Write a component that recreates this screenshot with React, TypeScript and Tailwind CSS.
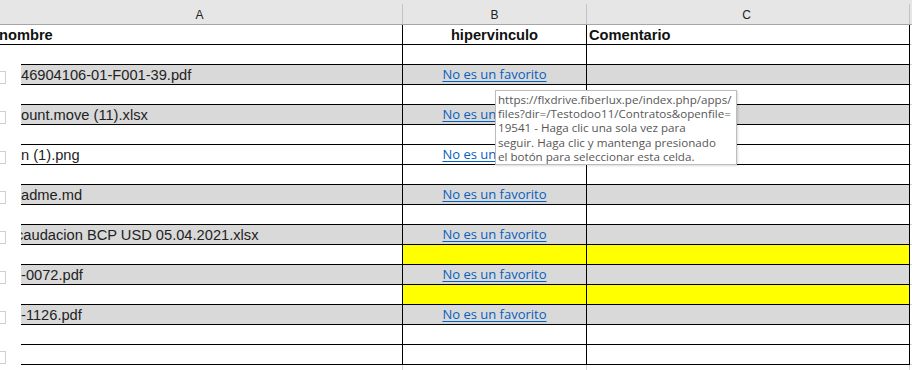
import React from "react";

// Sheet rows below the "nombre" header row
type Row = {
  name?: string;
  shift?: string;
  link?: boolean;
  fill: "white" | "gray" | "yellow";
  box?: boolean;
};

const ROWS: Row[] = [
  { fill: "white" },
  { name: "46904106-01-F001-39.pdf", link: true, fill: "gray", box: true },
  { fill: "white" },
  { name: "ount.move (11).xlsx", link: true, fill: "gray", box: true },
  { fill: "white" },
  { name: "n (1).png", link: true, fill: "white", box: true },
  { fill: "white" },
  { name: "adme.md", link: true, fill: "gray", box: true },
  { fill: "white" },
  { name: "caudacion BCP USD 05.04.2021.xlsx", shift: "ml-[-5px]", link: true, fill: "gray", box: true },
  { fill: "yellow" },
  { name: "-0072.pdf", link: true, fill: "gray", box: true },
  { fill: "yellow" },
  { name: "-1126.pdf", link: true, fill: "gray", box: true },
  { fill: "white" },
  { fill: "white", box: true },
];

const TOOLTIP = [
  "https://flxdrive.fiberlux.pe/index.php/apps/",
  "files?dir=/Testodoo11/Contratos&openfile=",
  "19541 - Haga clic una sola vez para",
  "seguir. Haga clic y mantenga presionado",
  "el botón para seleccionar esta celda.",
];

function SheetRow({ row }: { row: Row }) {
  const aBg = row.fill === "gray" ? "bg-[#d9d9d9]" : "bg-white";
  const bcBg =
    row.fill === "gray" ? "bg-[#d9d9d9]" : row.fill === "yellow" ? "bg-[#ffff00]" : "bg-white";

  return (
    <div className="flex h-[20px]">
      <div className="w-[21px] overflow-hidden">
        {row.box && (
          <div className="ml-[-7px] mt-[6px] h-[13px] w-[13px] border border-[#cfcfcf] bg-white" />
        )}
      </div>
      <div className={`w-[381px] overflow-hidden whitespace-nowrap border-b border-black ${aBg}`}>
        {row.name && (
          <div className={`text-[14.67px] leading-[21px] text-[#222] ${row.shift ?? ""}`}>{row.name}</div>
        )}
      </div>
      <div className="w-px bg-black" />
      <div className={`w-[183px] border-b border-black text-center leading-[18px] ${bcBg}`}>
        {row.link && (
          <span className="font-['Open_Sans',sans-serif] text-[13px] text-[#0560c0] underline underline-offset-[2px]">
            No es un favorito
          </span>
        )}
      </div>
      <div className="w-px bg-black" />
      <div className={`w-[322px] border-b border-black ${bcBg}`} />
      <div className="w-px bg-black" />
      <div className="w-[2px] border-b border-[#d4d4d4]" />
    </div>
  );
}

export default function App() {
  return (
    <div className="relative h-[370px] w-[912px] overflow-hidden bg-white font-['Liberation_Sans',Arial,sans-serif]">
      {/* Column letters */}
      <div className="flex h-[25px] border-b border-[#a6a6a6] bg-[#e6e6e6] text-[12px] leading-[20px] text-[#222]">
        <div className="w-[402px] pr-[3px] pt-[5px] text-center">A</div>
        <div className="mt-[4px] w-px bg-[#c4c4c4]" />
        <div className="w-[183px] pt-[5px] text-center">B</div>
        <div className="mt-[4px] w-px bg-[#c4c4c4]" />
        <div className="w-[322px] pr-[3px] pt-[5px] text-center">C</div>
        <div className="mt-[4px] w-px bg-[#c4c4c4]" />
        <div className="w-[2px]" />
      </div>

      {/* Header row */}
      <div className="flex h-[20px] text-[14.67px] font-bold leading-[20px] text-[#111]">
        <div className="w-[402px] overflow-hidden whitespace-nowrap border-b border-black">
          <div className="ml-[-1px]">nombre</div>
        </div>
        <div className="w-px bg-black" />
        <div className="w-[183px] border-b border-black text-center">hipervinculo</div>
        <div className="w-px bg-black" />
        <div className="w-[322px] border-b border-black pl-[2px]">Comentario</div>
        <div className="w-px bg-black" />
        <div className="w-[2px] border-b border-[#d4d4d4]" />
      </div>

      {ROWS.map((row, i) => (
        <SheetRow key={i} row={row} />
      ))}

      {/* Grid continues below */}
      <div className="flex h-[6px]">
        <div className="w-[402px]" />
        <div className="w-px bg-[#d4d4d4]" />
        <div className="w-[183px]" />
        <div className="w-px bg-[#d4d4d4]" />
        <div className="w-[322px]" />
        <div className="w-px bg-[#d4d4d4]" />
      </div>

      {/* Hyperlink tooltip */}
      <div className="absolute left-[495px] top-[90px] h-[75px] w-[242px] border border-[#bdbdbd] bg-white pl-[2px] pt-[2px] font-['Open_Sans',sans-serif] text-[11.6px] leading-[14.2px] text-[#575757] shadow-[1px_1px_2px_rgba(0,0,0,0.15)]">
        {TOOLTIP.map((line) => (
          <div key={line} className="whitespace-nowrap">
            {line}
          </div>
        ))}
      </div>
    </div>
  );
}
